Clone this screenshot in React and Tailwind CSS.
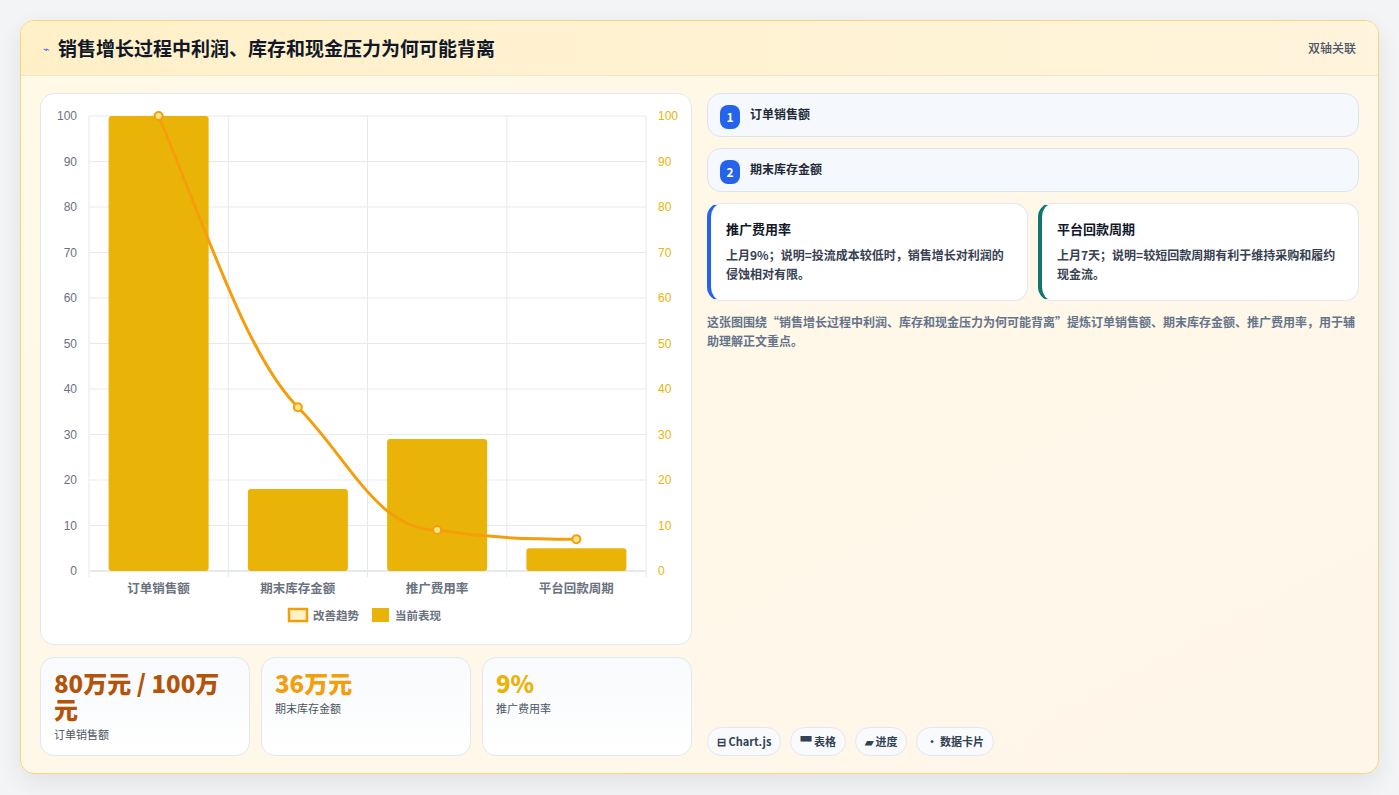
export default function App() {
  const font = { fontFamily: '"Noto Sans CJK SC","Noto Sans",sans-serif' };
  const X0 = 48, X1 = 605, Y0 = 22, Y1 = 477;
  const yv = (v) => Y1 - (v / 100) * (Y1 - Y0);
  const cw = (X1 - X0) / 4;
  const cx = (i) => X0 + cw * i + cw / 2;
  const bars = [100, 18, 29, 5];
  const line = [100, 36, 9, 7];
  const cats = ["订单销售额", "期末库存金额", "推广费用率", "平台回款周期"];
  const pts = line.map((v, i) => [cx(i), yv(v)]);
  const d = `M${pts[0][0]},${pts[0][1]} C${pts[0][0] + 50},${pts[0][1] + 120} ${pts[1][0] - 50},${pts[1][1] - 50} ${pts[1][0]},${pts[1][1]} C${pts[1][0] + 50},${pts[1][1] + 50} ${pts[2][0] - 60},${pts[2][1]} ${pts[2][0]},${pts[2][1]} C${pts[2][0] + 50},${pts[2][1] + 8} ${pts[3][0] - 50},${pts[3][1]} ${pts[3][0]},${pts[3][1]}`;
  const ticks = [0, 10, 20, 30, 40, 50, 60, 70, 80, 90, 100];
  return (
    <div className="w-[1399px] h-[795px] bg-[#f3f4f6] pt-[20px] px-[20px]" style={font}>
      <div className="h-[754px] rounded-[14px] border border-[#f5d77a] bg-gradient-to-br from-[#fff9e6] to-[#fff6ea] shadow-[0_8px_24px_rgba(0,0,0,0.08)] overflow-hidden flex flex-col">
        <div className="h-[55px] shrink-0 flex items-center justify-between px-[22px] bg-gradient-to-r from-[#fff0c8] to-[#fff4dc] border-b border-[#f3e6c4]">
          <div className="flex items-center gap-[8px]">
            <span className="text-[#3b6fd8] text-[11px]">⌁</span>
            <span className="text-[19px] font-bold text-[#111827]">销售增长过程中利润、库存和现金压力为何可能背离</span>
          </div>
          <span className="text-[12px] text-[#4b5563] font-medium">双轴关联</span>
        </div>
        <div className="flex-1 flex gap-[15px] p-[19px] pt-[17px]">
          <div className="w-[652px] flex flex-col gap-[12px]">
            <div className="h-[552px] bg-white rounded-[14px] border border-[#e5e7eb]">
              <svg width="652" height="551" className="block">
                {ticks.map((t) => (
                  <g key={t}>
                    <line x1={X0} x2={X1} y1={yv(t)} y2={yv(t)} stroke={t === 0 ? "#cbd5e1" : "#e5e9f0"} />
                    <text x={X0 - 12} y={yv(t) + 4} textAnchor="end" fontSize="12" fill="#6b7280" fontFamily="Liberation Sans, sans-serif">{t}</text>
                    <text x={X1 + 12} y={yv(t) + 4} fontSize="12" fill="#eab308" fontFamily="Liberation Sans, sans-serif">{t}</text>
                  </g>
                ))}
                {[0, 1, 2, 3, 4].map((i) => (
                  <line key={i} x1={X0 + cw * i} x2={X0 + cw * i} y1={Y0} y2={Y1 + 6} stroke="#e5e9f0" />
                ))}
                {bars.map((v, i) => (
                  <rect key={i} x={cx(i) - 50} y={yv(v)} width="100" height={Y1 - yv(v)} rx="3" fill="#eab308" />
                ))}
                <path d={d} fill="none" stroke="#f59e0b" strokeWidth="3" />
                {pts.map((p, i) => (
                  <circle key={i} cx={p[0]} cy={p[1]} r="4" fill="#fde68a" stroke="#f59e0b" strokeWidth="2" />
                ))}
                {cats.map((c, i) => (
                  <text key={c} x={cx(i)} y={499} textAnchor="middle" fontSize="12.5" fontWeight="600" fill="#6b7280">{c}</text>
                ))}
                <rect x="248" y="515" width="18" height="12" fill="#fef3c7" stroke="#f59e0b" strokeWidth="2.5" />
                <text x="272" y="526" fontSize="11.5" fontWeight="600" fill="#6b7280">改善趋势</text>
                <rect x="331" y="514" width="17" height="14" fill="#eab308" />
                <text x="354" y="526" fontSize="11.5" fontWeight="600" fill="#6b7280">当前表现</text>
              </svg>
            </div>
            <div className="grid grid-cols-3 gap-[11px] h-[99px]">
              {[
                ["80万元 / 100万元", "订单销售额", "text-[#b45309]"],
                ["36万元", "期末库存金额", "text-[#f59e0b]"],
                ["9%", "推广费用率", "text-[#eab308]"],
              ].map(([v, l, c]) => (
                <div key={l} className="rounded-[14px] border border-[#e2e8f0] bg-gradient-to-b from-[#f8fafc] to-white px-[13px] pt-[12px]">
                  <div className={`text-[24px] leading-[26px] font-extrabold ${c}`}>{v}</div>
                  <div className="text-[11px] text-[#4b5563] mt-[4px]">{l}</div>
                </div>
              ))}
            </div>
          </div>
          <div className="flex-1 flex flex-col">
            <div className="flex flex-col gap-[11px]">
              {["订单销售额", "期末库存金额"].map((t, i) => (
                <div key={t} className="h-[44px] rounded-[14px] border border-[#dbe4ef] bg-[#f5f9fd] flex items-center px-[12px] gap-[10px]">
                  <span className="w-[20px] h-[24px] rounded-[8px] bg-[#2563eb] text-white text-[12px] font-bold flex items-center justify-center mt-[4px]">{i + 1}</span>
                  <span className="text-[12px] font-semibold text-[#1f2937] -mt-[2px]">{t}</span>
                </div>
              ))}
            </div>
            <div className="grid grid-cols-2 gap-[10px] mt-[11px]">
              {[
                ["推广费用率", "上月9%；说明=投流成本较低时，销售增长对利润的侵蚀相对有限。", "border-l-[#2563eb]"],
                ["平台回款周期", "上月7天；说明=较短回款周期有利于维持采购和履约现金流。", "border-l-[#0f766e]"],
              ].map(([t, b, c]) => (
                <div key={t} className={`h-[98px] rounded-[14px] border border-[#e2e8f0] border-l-4 ${c} bg-white px-[15px] pt-[15px]`}>
                  <div className="text-[13px] font-bold text-[#111827]">{t}</div>
                  <div className="text-[12px] leading-[19px] font-semibold text-[#374151] mt-[6px]">{b}</div>
                </div>
              ))}
            </div>
            <p className="text-[12px] leading-[19px] font-semibold text-[#64748b] mt-[11px]">这张图围绕“销售增长过程中利润、库存和现金压力为何可能背离”提炼订单销售额、期末库存金额、推广费用率，用于辅助理解正文重点。</p>
            <div className="mt-auto flex gap-[9px]">
              {["⊟ Chart.js", "▀ 表格", "▰ 进度", "• 数据卡片"].map((t) => (
                <span key={t} className="h-[29px] px-[9px] rounded-full border border-[#e2e8f0] bg-[#f8fafc] text-[11px] font-bold text-[#334155] flex items-center">{t}</span>
              ))}
            </div>
          </div>
        </div>
      </div>
    </div>
  );
}
